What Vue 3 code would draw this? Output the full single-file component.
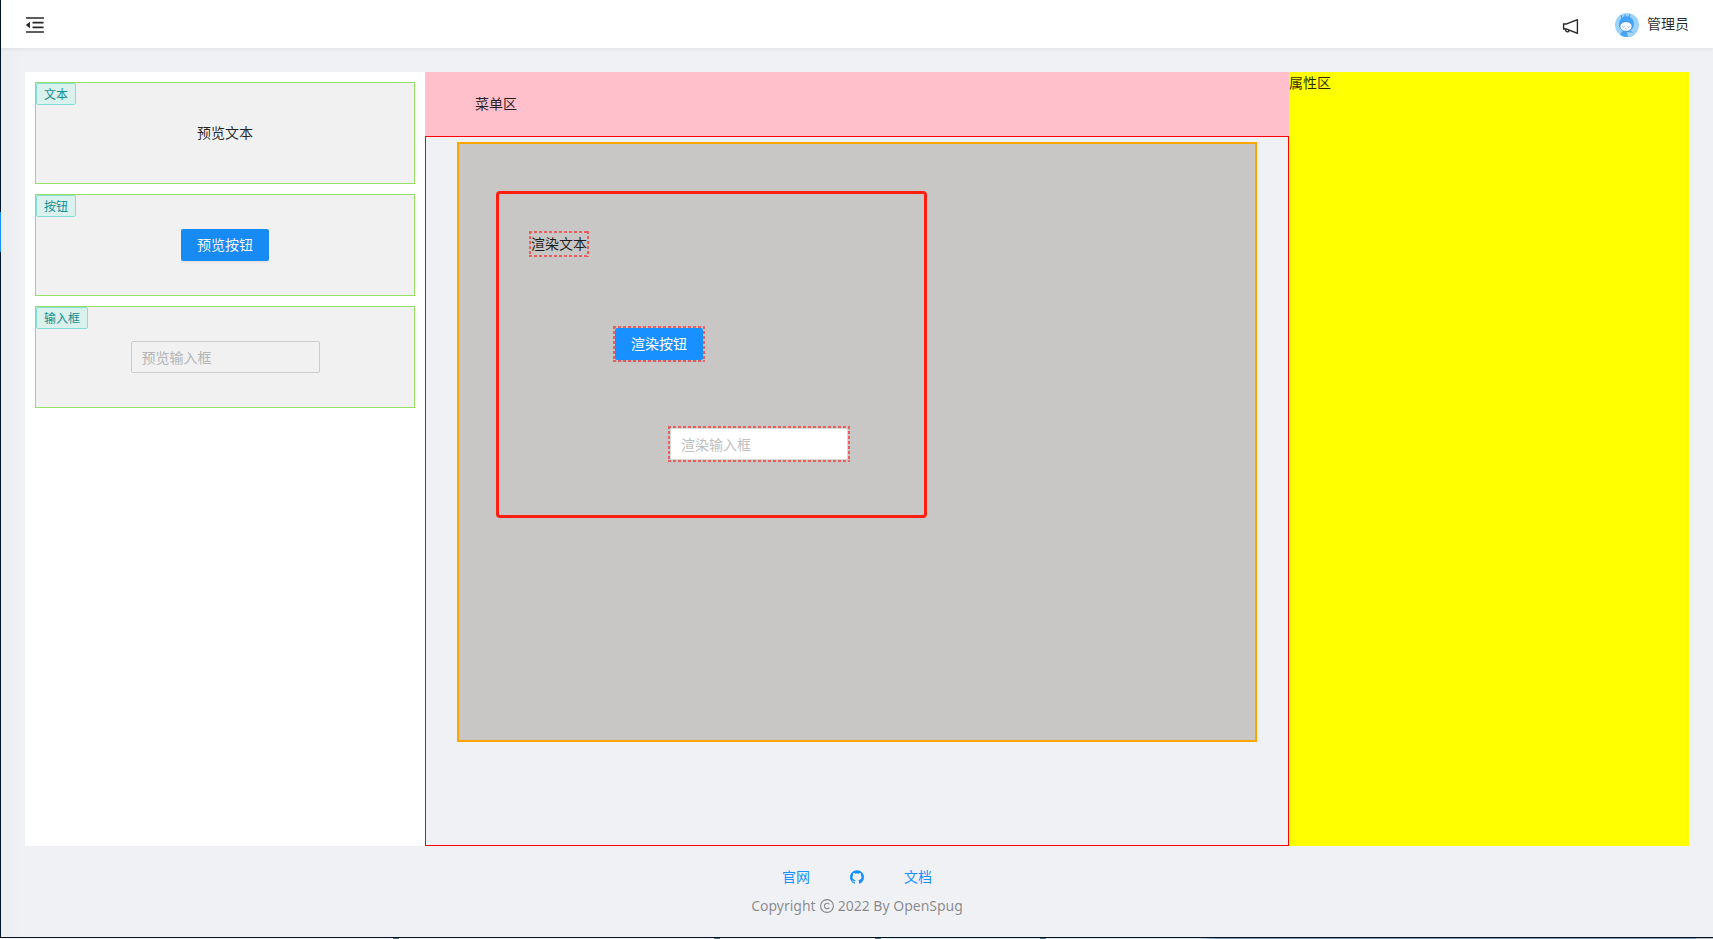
<script setup>
const menuFold =
  'M408 442h480c4.400 0 8-3.600 8-8v-56c0-4.400-3.600-8-8-8H408c-4.400 0-8 3.600-8 8v56c0 4.400 3.600 8 8 8zm-8 204c0 4.400 3.600 8 8 8h480c4.400 0 8-3.600 8-8v-56c0-4.400-3.600-8-8-8H408c-4.400 0-8 3.600-8 8v56zm504-486H120c-4.400 0-8 3.600-8 8v56c0 4.400 3.600 8 8 8h784c4.400 0 8-3.600 8-8v-56c0-4.400-3.600-8-8-8zm0 632H120c-4.400 0-8 3.600-8 8v56c0 4.400 3.600 8 8 8h784c4.400 0 8-3.600 8-8v-56c0-4.400-3.600-8-8-8zM115.400 518.900L271.700 642c5.800 4.600 14.400.5 14.400-6.900V388.900c0-7.400-8.500-11.500-14.400-6.900L115.400 505.100a8.740 8.740 0 0 0 0 13.800z'
const notification =
  'M880 112c-3.800 0-7.700.7-11.600 2.300L292 345.900H128c-8.800 0-16 7.400-16 16.600v299c0 9.200 7.200 16.600 16 16.600h101.700c-3.700 11.600-5.700 23.900-5.700 36.400 0 65.900 53.800 119.500 120 119.500 55.400 0 102.100-37.600 115.900-88.400l408.600 164.200c3.900 1.500 7.800 2.300 11.600 2.300 16.900 0 32-14.200 32-33.200V145.200C912 126.200 897 112 880 112zM344 762.300c-26.500 0-48-21.400-48-47.800 0-11.200 3.900-21.900 11-30.400l84.900 34.100c-2 24.600-22.700 44.100-47.900 44.100zm496 58.400L318.800 611.300l-12.900-5.200H184V417.900h121.900l12.900-5.200L840 203.300v617.400z'
const github =
  'M511.600 76.300C264.300 76.200 64 276.400 64 523.500 64 718.900 189.300 885 363.800 946c23.500 5.900 19.900-10.800 19.900-22.200v-77.500c-135.700 15.900-141.200-73.900-150.300-88.900C215 726 171.500 718 184.500 703c30.900-15.900 62.400 4 98.900 57.900 26.400 39.100 77.900 32.500 104 26 5.700-23.500 17.900-44.500 34.700-60.800-140.600-25.200-199.200-111-199.200-213 0-49.500 16.300-95 48.300-131.700-20.400-60.500 1.900-112.300 4.900-120 58.100-5.200 118.500 41.600 123.200 45.300 33-8.900 70.700-13.600 112.900-13.600 42.400 0 80.200 4.900 113.500 13.900 11.300-8.600 67.300-48.800 121.300-43.900 2.900 7.700 24.700 58.300 5.500 118 32.400 36.800 48.900 82.700 48.900 132.300 0 102.200-59 188.100-200 212.900a127.500 127.500 0 0 1 38.100 91v112.500c.8 9 0 17.900 15 17.900 177.100-59.700 304.600-227 304.600-424.100 0-247.200-200.400-447.300-447.500-447.300z'
const taskMarks = [393, 714, 875, 1040]
</script>

<template>
  <div class="page">
    <div class="frame">
      <aside class="rail"><div class="rail-active"></div></aside>
      <div class="layout">
        <header class="header">
          <button class="icon-button" type="button" aria-label="折叠菜单">
            <svg class="fold-icon" viewBox="64 64 896 896"><path :d="menuFold" /></svg>
          </button>
          <div class="header-right">
            <button class="icon-button bell" type="button" aria-label="通知">
              <svg class="bell-icon" viewBox="64 64 896 896"><path :d="notification" /></svg>
            </button>
            <a class="user" href="#">
              <svg class="avatar" viewBox="0 0 24 24" aria-hidden="true">
                <defs><clipPath id="avatar-clip"><circle cx="12" cy="12" r="12" /></clipPath></defs>
                <g clip-path="url(#avatar-clip)">
                  <rect width="24" height="24" fill="#9bd3fc" />
                  <path d="M5 24c0-5 3-7 7-7s7 2 7 7z" fill="#4aa6f5" />
                  <path d="M12 19l7 1-2 4h-4z" fill="#a5d6fa" />
                  <path d="M7 5L6 2M10 4V1.500M14 4l1-2.500" stroke="#3c8fe0" stroke-width="1" fill="none" />
                  <ellipse cx="11.500" cy="11" rx="7.500" ry="7.800" fill="#41a4f8" />
                  <ellipse cx="11" cy="13.500" rx="6" ry="4.800" fill="#f3faff" stroke="#3f7fc8" stroke-width=".6" />
                  <path d="M7.500 13.500l1.200.8 1-.8M12.500 13.500l1 .8 1.200-.8M10.200 15.700h1.400" stroke="#7c9dd0" stroke-width=".7" fill="none" />
                </g>
              </svg>
              <span>管理员</span>
            </a>
          </div>
        </header>

        <main class="workspace">
          <section class="palette">
            <div class="card">
              <span class="tag">文本</span>
              <span>预览文本</span>
            </div>
            <div class="card">
              <span class="tag">按钮</span>
              <button class="primary muted" type="button">预览按钮</button>
            </div>
            <div class="card">
              <span class="tag">输入框</span>
              <input class="field preview-field" type="text" placeholder="预览输入框" aria-label="预览输入框" />
            </div>
          </section>

          <section class="editor">
            <div class="menu-bar">菜单区</div>
            <div class="stage">
              <div class="canvas">
                <div class="marker"></div>
                <div class="node node-text">渲染文本</div>
                <div class="node node-button"><button class="primary" type="button">渲染按钮</button></div>
                <div class="node node-input">
                  <input class="field render-field" type="text" placeholder="渲染输入框" aria-label="渲染输入框" />
                </div>
              </div>
            </div>
          </section>

          <section class="properties">属性区</section>
        </main>

        <footer class="footer">
          <nav class="links">
            <a href="#">官网</a>
            <a href="#" aria-label="GitHub">
              <svg class="small-icon" viewBox="64 64 896 896"><path :d="github" /></svg>
            </a>
            <a href="#">文档</a>
          </nav>
          <div class="copyright">
            <span>Copyright</span>
            <svg class="small-icon" viewBox="0 0 14 14" aria-hidden="true">
              <circle cx="7" cy="7" r="6.400" fill="none" stroke="currentColor" stroke-width="1.100" />
              <path d="M9.300 5.400A2.700 2.700 0 1 0 9.300 8.600" fill="none" stroke="currentColor" stroke-width="1.100" />
            </svg>
            <span>2022 By OpenSpug</span>
          </div>
        </footer>
      </div>
    </div>
    <div class="taskbar">
      <i v-for="x in taskMarks" :key="x" class="task-mark" :style="{ left: x + 'px' }"></i>
    </div>
  </div>
</template>

<style>
body {
  margin: 0;
}
</style>

<style scoped>
.page {
  display: flex;
  flex-direction: column;
  box-sizing: border-box;
  min-height: 100vh;
  background: #f0f2f5;
  color: rgba(0, 0, 0, 0.85);
  font-family: "Noto Sans", "Noto Sans CJK SC", sans-serif;
  font-size: 14px;
  line-height: 22px;
}

.page * {
  box-sizing: border-box;
}

svg {
  display: block;
  fill: currentColor;
}

a {
  text-decoration: none;
}

.frame {
  display: flex;
  flex: 1;
}

.rail {
  width: 1px;
  padding-top: 212px;
  background: #001529;
}

.rail-active {
  height: 40px;
  background: #1890ff;
}

.layout {
  display: flex;
  flex: 1;
  flex-direction: column;
  min-width: 0;
  background: linear-gradient(90deg, #ebedf1, #f0f1f5 24px);
}

.header {
  display: flex;
  align-items: center;
  justify-content: space-between;
  height: 48px;
  padding: 0 24px;
  background: #fff;
  box-shadow: 0 1px 4px rgba(0, 21, 41, 0.08);
}

.icon-button {
  padding: 2px 0 0;
  border: 0;
  background: none;
  color: rgba(0, 0, 0, 0.85);
  cursor: pointer;
}

.bell {
  padding-top: 4px;
}

.fold-icon {
  width: 20px;
  height: 20px;
}

.bell-icon {
  width: 17px;
  height: 17px;
}

.header-right {
  display: flex;
  align-items: center;
  gap: 36px;
}

.user {
  display: flex;
  align-items: center;
  gap: 8px;
  color: inherit;
}

.avatar {
  width: 24px;
  height: 24px;
  margin-top: 2px;
}

.workspace {
  display: flex;
  flex: 1;
  margin: 24px 24px 0;
}

.palette {
  display: flex;
  flex: 0 0 400px;
  flex-direction: column;
  gap: 10px;
  padding: 10px;
  background: #fff;
}

.card {
  position: relative;
  display: flex;
  align-items: center;
  justify-content: center;
  height: 102px;
  border: 1px solid #95de64;
  background: #f1f1f1;
}

.tag {
  position: absolute;
  top: 0;
  left: 0;
  padding: 2px 7px 0;
  border: 1px solid #84dfd6;
  border-radius: 2px;
  background: #daf1ed;
  color: #128f93;
  font-size: 12px;
  line-height: 18px;
}

.primary {
  display: block;
  height: 32px;
  padding: 0 16px;
  border: 0;
  border-radius: 2px;
  background: #1890ff;
  box-shadow: 0 2px 0 rgba(0, 0, 0, 0.045);
  color: #fff;
  font: inherit;
  cursor: pointer;
}

.muted {
  background: #178af4;
  color: #f4f4f4;
}

.field {
  display: block;
  height: 32px;
  padding: 4px 10px;
  border: 1px solid #d9d9d9;
  border-radius: 2px;
  background: #fff;
  color: inherit;
  font: inherit;
}

.field::placeholder {
  color: #bfbfbf;
  opacity: 1;
}

.preview-field {
  width: 189px;
  border-color: #cdcdcd;
  background: transparent;
}

.preview-field::placeholder {
  color: #b5b5b5;
}

.editor {
  display: flex;
  flex: 1;
  flex-direction: column;
  min-width: 0;
}

.menu-bar {
  display: flex;
  align-items: center;
  height: 64px;
  padding: 0 50px;
  background: #ffc0cb;
}

.stage {
  flex: 1;
  padding: 5px 0;
  border: 1px solid #f00;
}

.canvas {
  position: relative;
  width: 800px;
  height: 600px;
  margin: 0 auto;
  border: 2px solid #ffa500;
  background: #c9c7c5;
}

.marker {
  position: absolute;
  top: 47px;
  left: 37px;
  width: 431px;
  height: 327px;
  border: 3px solid #ff1f0f;
  border-radius: 4px;
}

/* Fine dashes: 3px on, 2px off, on all four edges */
.node {
  --dash: #ea5f5e 0 3px, transparent 3px 5px;
  position: absolute;
  padding: 2px;
  background:
    repeating-linear-gradient(90deg, var(--dash)) top / 100% 2px no-repeat,
    repeating-linear-gradient(90deg, var(--dash)) bottom / 100% 2px no-repeat,
    repeating-linear-gradient(180deg, var(--dash)) left / 2px 100% no-repeat,
    repeating-linear-gradient(180deg, var(--dash)) right / 2px 100% no-repeat;
}

.node-text {
  top: 87px;
  left: 70px;
}

.node-button {
  top: 182px;
  left: 154px;
}

.node-input {
  top: 282px;
  left: 209px;
}

.render-field {
  width: 178px;
}

.properties {
  flex: 0 0 400px;
  background: #ff0;
}

.footer {
  display: flex;
  flex-direction: column;
  align-items: center;
  gap: 7px;
  padding: 20px 0;
}

.links {
  display: flex;
  align-items: center;
  gap: 40px;
}

.links a {
  color: #1890ff;
}

.small-icon {
  width: 14px;
  height: 14px;
}

.copyright {
  display: flex;
  align-items: center;
  gap: 4px;
  color: rgba(0, 0, 0, 0.45);
}

.taskbar {
  position: relative;
  height: 2px;
  overflow: hidden;
  border-top: 1px solid #0a1420;
  background: linear-gradient(90deg, #eef4f9 0, #eef4f9 51%, #d3e4f1 52%, #d3e4f1 70%, #6f9bc4 71%, #6f9bc4 99%, #b4bcc4 99%);
}

.task-mark {
  position: absolute;
  top: 0;
  width: 6px;
  height: 1px;
  background: #4f7386;
}
</style>
